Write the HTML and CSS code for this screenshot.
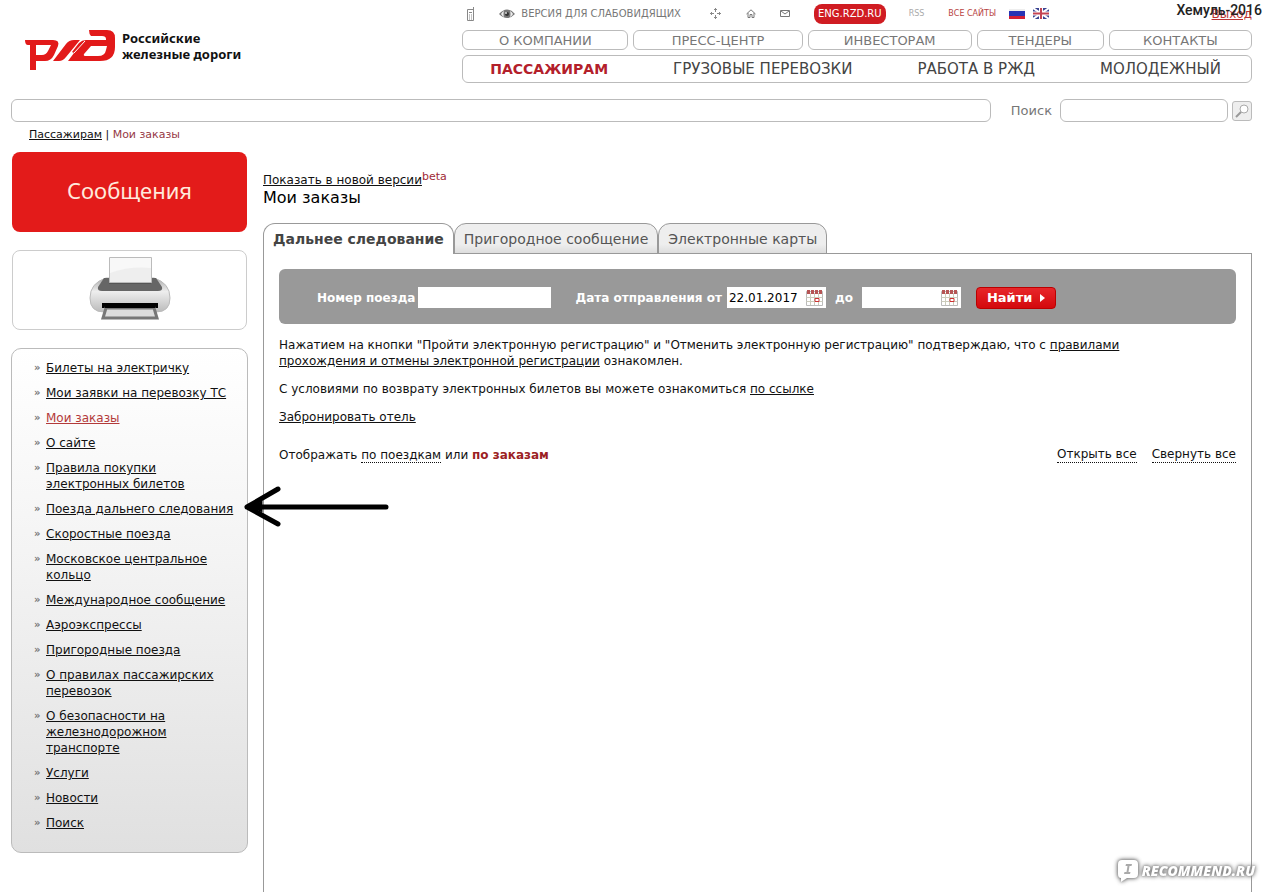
FILE: index.html
```html
<!DOCTYPE html>
<html lang="ru">
<head>
<meta charset="utf-8">
<title>Мои заказы</title>
<link rel="stylesheet" href="styles.css">
</head>
<body>
<div class="page">
  <header class="header">
    <a class="brand" href="#">
      <svg class="brand-mark" viewBox="0 0 92 42" aria-hidden="true">
        <path fill="#e21a1a" fill-rule="evenodd" d="M0 11H28Q35 11 33 17L29 26Q26 32 20 32H11V41H5V16H3Q0 16 0 11ZM11 16V26H17Q21 26 23 22L26 16Z"/>
        <path fill="#e21a1a" d="M28 32 41 15Q44 11 49 11H55L41 28Q38 32 34 32Z"/>
        <path fill="#e21a1a" fill-rule="evenodd" d="M43 32 49 24 47 23 54 14Q57 11 61 11H81V10Q81 7 77 7H66Q64 5 64 1H82Q90 1 90 9V18Q90 32 75 32ZM66 17 59 25Q58 27 61 27H73Q80 27 81 21L82 17Z"/>
        <path fill="none" stroke="#fff" d="M49 24 60 12"/>
      </svg>
      <span class="brand-name">Российские<br>железные дороги</span>
    </a>
    <div class="header-nav">
      <div class="tools">
        <a class="tool phone" href="#" aria-label="Мобильная версия"><svg width="9" height="14" viewBox="0 0 9 14" fill="none" stroke="#888"><path d="M1.500 2.500h6v11h-6zM7.500 3V0M3 5.500h3M3 8h1m1 0h1M3 10h1m1 0h1M3 12h1m1 0h1"/></svg></a>
        <a class="tool vision" href="#"><svg width="16" height="10" viewBox="0 0 16 10"><path d="M0 5Q8-4 16 5Q8 13 0 5Z" fill="#777"/><path d="M2 5Q3 3 5 2Q4 5 5 8Q3 7 2 5ZM14 5Q13 3 11 2Q12 5 11 8Q13 7 14 5Z" fill="#eee"/><circle cx="8" cy="5" r="2" fill="#333"/><circle cx="7" cy="4" r="1" fill="#ddd"/></svg>ВЕРСИЯ ДЛЯ СЛАБОВИДЯЩИХ</a>
        <a class="tool move" href="#" aria-label="Карта сайта"><svg width="11" height="11" viewBox="0 0 11 11" fill="none" stroke="#888"><path d="M5.500 0v4m0 3v4M0 5.500h4m3 0h4M4 1.500h3M4 9.500h3M1.500 4v3M9.500 4v3"/></svg></a>
        <a class="tool home" href="#" aria-label="Главная"><svg width="10" height="9" viewBox="0 0 10 9" fill="none" stroke="#777"><path d="M.5 5 5 .8 9.500 5M2 4v4.500h2v-3h2v3h2V4"/></svg></a>
        <a class="tool mail" href="#" aria-label="Почта"><svg width="10" height="7" viewBox="0 0 10 7" fill="none" stroke="#777"><path d="M.5.5h9v6h-9zM1 1l4 3 4-3"/></svg></a>
        <a class="tool english" href="#">ENG.RZD.RU</a>
        <a class="tool rss" href="#">RSS</a>
        <a class="tool sites" href="#">ВСЕ САЙТЫ</a>
        <a class="tool flag" href="#" aria-label="Русский"><svg width="16" height="10" viewBox="0 0 16 10"><path fill="#eee" d="M0 0h16v4H0z"/><path fill="#2733b4" d="M0 2h16v5H0z"/><path fill="#d22035" d="M0 7h16v3H0z"/></svg></a>
        <a class="tool flag-gb" href="#" aria-label="English"><svg width="16" height="11" viewBox="0 0 16 11"><path fill="#394391" d="M0 0h16v11H0z"/><path stroke="#fff" stroke-width="2" d="M0 0l16 11M16 0 0 11"/><path stroke="#fff" stroke-width="4" d="M8 0v11M0 5.500h16"/><path stroke="#c44453" stroke-width="2" d="M8 0v11M0 5.500h16"/></svg></a>
        <a class="tool logout" href="#">Выход</a>
      </div>
      <nav class="nav-small">
        <a href="#">О КОМПАНИИ</a><a href="#">ПРЕСС-ЦЕНТР</a><a href="#">ИНВЕСТОРАМ</a><a href="#">ТЕНДЕРЫ</a><a href="#">КОНТАКТЫ</a>
      </nav>
      <nav class="nav-main">
        <a class="active" href="#">ПАССАЖИРАМ</a><a href="#">ГРУЗОВЫЕ ПЕРЕВОЗКИ</a><a href="#">РАБОТА В РЖД</a><a href="#">МОЛОДЕЖНЫЙ</a>
      </nav>
    </div>
  </header>

  <form class="search">
    <div class="search-strip"></div>
    <label for="q">Поиск</label>
    <input id="q" type="text">
    <button type="button" aria-label="Искать"><svg width="18" height="18" viewBox="0 0 18 18" fill="none"><circle cx="11" cy="7" r="4" stroke="#aaa" fill="#fff"/><path d="m8 10-5 5" stroke="#999" stroke-width="2"/></svg></button>
  </form>

  <nav class="crumbs"><a href="#">Пассажирам</a> | <span>Мои заказы</span></nav>

  <div class="columns">
    <aside class="side">
      <a class="messages" href="#">Сообщения</a>
      <a class="print" href="#" aria-label="Печать">
        <svg width="82" height="64" viewBox="0 0 82 64">
          <defs><linearGradient id="shell" x1="0" y1="0" x2="0" y2="1"><stop offset="0" stop-color="#aaa"/><stop offset=".4" stop-color="#eee"/><stop offset="1" stop-color="#bbb"/></linearGradient></defs>
          <path d="M17 22h48q16 5 16 20 0 14-14 14H15Q1 56 1 42 1 27 17 22Z" fill="url(#shell)" stroke="#bbb"/>
          <path d="M15 22h52l6 9q1 4-4 4H13q-5 0-4-4Z" fill="#666"/>
          <path d="M20 26h42v2H20z" fill="#555"/>
          <path d="M20.500 1.500h42v25h-42z" fill="#f8f8f8" stroke="#bbb"/>
          <path d="M21 17q20-7 41-5v14H21Z" fill="#eee"/>
          <path d="M13 47h56v5H13z" fill="#000"/>
          <path d="M17 52h48l3 10H14Z" fill="#ddd" stroke="#777" stroke-width="3"/>
          <path d="M16 50h50v2H16z" fill="#000"/>
        </svg>
      </a>
      <ul class="menu">
        <li><a href="#">Билеты на электричку</a></li>
        <li><a href="#">Мои заявки на перевозку ТС</a></li>
        <li><a class="active" href="#">Мои заказы</a></li>
        <li><a href="#">О сайте</a></li>
        <li><a href="#">Правила покупки электронных билетов</a></li>
        <li><a href="#">Поезда дальнего следования</a></li>
        <li><a href="#">Скоростные поезда</a></li>
        <li><a href="#">Московское центральное кольцо</a></li>
        <li><a href="#">Международное сообщение</a></li>
        <li><a href="#">Аэроэкспрессы</a></li>
        <li><a href="#">Пригородные поезда</a></li>
        <li><a href="#">О правилах пассажирских перевозок</a></li>
        <li><a href="#">О безопасности на железнодорожном транспорте</a></li>
        <li><a href="#">Услуги</a></li>
        <li><a href="#">Новости</a></li>
        <li><a href="#">Поиск</a></li>
      </ul>
    </aside>

    <main class="main">
      <div class="version"><a href="#">Показать в новой версии</a><span class="beta">beta</span></div>
      <h1>Мои заказы</h1>
      <div class="tabs">
        <button type="button" class="tab current">Дальнее следование</button>
        <button type="button" class="tab">Пригородное сообщение</button>
        <button type="button" class="tab">Электронные карты</button>
      </div>
      <section class="panel">
        <form class="filter">
          <label for="train">Номер поезда</label>
          <input id="train" class="train" type="text">
          <label for="from" class="from-label">Дата отправления от</label>
          <span class="date"><input id="from" type="text" value="22.01.2017"><svg width="17" height="16" viewBox="0 0 17 16"><path d="M.5 1.500h16v14H.5z" fill="#fff" stroke="#bbb"/><path d="M.5 7.500h16m-16 4h16M4.500 3v12m4-12v12m4-12v12" stroke="#ccb" fill="none"/><path d="M1 0h3v4H1zm4 0h3v4H5zm4 0h3v4H9zm4 0h3v4h-3z" fill="#b65555"/><path d="M9 8.500h4v3H9z" fill="#fff" stroke="#c33"/></svg></span>
          <label for="to" class="to-label">до</label>
          <span class="date"><input id="to" type="text"><svg width="17" height="16" viewBox="0 0 17 16"><path d="M.5 1.500h16v14H.5z" fill="#fff" stroke="#bbb"/><path d="M.5 7.500h16m-16 4h16M4.500 3v12m4-12v12m4-12v12" stroke="#ccb" fill="none"/><path d="M1 0h3v4H1zm4 0h3v4H5zm4 0h3v4H9zm4 0h3v4h-3z" fill="#b65555"/><path d="M9 8.500h4v3H9z" fill="#fff" stroke="#c33"/></svg></span>
          <button type="button" class="find">Найти<svg width="5" height="8" viewBox="0 0 5 8"><path d="M0 0 5 4 0 8Z" fill="#fff"/></svg></button>
        </form>
        <p>Нажатием на кнопки "Пройти электронную регистрацию" и "Отменить электронную регистрацию" подтверждаю, что с <a href="#">правилами прохождения и отмены электронной регистрации</a> ознакомлен.</p>
        <p>С условиями по возврату электронных билетов вы можете ознакомиться <a href="#">по ссылке</a></p>
        <p><a href="#">Забронировать отель</a></p>
        <div class="view">
          <span>Отображать <a class="dotted" href="#">по поездкам</a> или <b>по заказам</b></span>
          <span class="view-all"><a class="dotted" href="#">Открыть все</a><a class="dotted" href="#">Свернуть все</a></span>
        </div>
      </section>
    </main>
  </div>

  <span class="user">Хемуль-2016</span>
  <svg class="arrow" width="146" height="42" viewBox="0 0 146 42" fill="none" stroke="#000" stroke-width="5" stroke-linecap="round" stroke-linejoin="round" aria-hidden="true"><path d="M3 22H142M34 4 3 22 34 39"/><path d="M4 22 18 16V27Z" fill="#000" stroke-width="1"/></svg>
  <div class="watermark">
    <svg width="22" height="24" viewBox="0 0 22 24"><path d="M5 1h12q4 0 4 4v10q0 4-4 4h-7l-6 4v-4Q1 19 1 15V5Q1 1 5 1Z" fill="#fff"/><path d="M9 5h6l-.5 2h-2l-1 6h2l-.5 2H7l.5-2h2l1-6h-2Z" fill="#aaa"/></svg>
    <span>RECOMMEND.RU</span>
  </div>
</div>
</body>
</html>
```
FILE: styles.css
```css
* { box-sizing: border-box; }

body {
  margin: 0;
  background: #fff;
  color: #111;
  font: 12px/16px Verdana, "DejaVu Sans", sans-serif;
}

a { color: inherit; }
input, button { font: inherit; }

.page {
  position: relative;
  display: flex;
  flex-direction: column;
  min-height: 100vh;
  padding: 0 13px 0 11px;
  overflow: hidden;
}

.header {
  display: grid;
  grid-template-columns: 4fr 7fr;
  height: 83px;
}

.brand {
  display: flex;
  align-items: flex-start;
  gap: 5px;
  padding: 29px 0 0 14px;
  text-decoration: none;
}

.brand-mark { width: 92px; height: 42px; }

.brand-name {
  padding-top: 1px;
  font: bold 13px/16px "Noto Sans", sans-serif;
}

.header-nav {
  display: flex;
  flex-direction: column;
  gap: 5px;
}

.tools {
  display: flex;
  align-items: center;
  height: 25px;
  padding: 2px 0 0 4px;
  color: #777;
  font-size: 10px;
  line-height: 12px;
}

.tool { display: flex; align-items: center; text-decoration: none; }
.vision { gap: 6px; margin-left: 24px; }
.move { margin-left: 29px; }
.home { margin-left: 25px; }
.mail { margin-left: 24px; }

.english {
  height: 20px;
  margin-left: 24px;
  padding: 0 4px;
  border-radius: 8px;
  background: #d01c22;
  color: #fff;
}

.rss { margin-left: 23px; color: #aaa; font-size: 8px; }
.sites { margin-left: 24px; color: #b84444; font-size: 8px; }
.flag { margin-left: 13px; }
.flag-gb { margin-left: 8px; }
.logout { margin-left: auto; color: #b33; font-size: 12px; text-decoration: underline; }

.nav-small {
  display: grid;
  grid-template-columns: 166fr 169fr 164fr 127fr 143fr;
  gap: 5px;
}

.nav-small a {
  height: 20px;
  border: 1px solid #bbb;
  border-radius: 6px;
  color: #777;
  font-size: 13px;
  line-height: 20px;
  text-align: center;
  text-decoration: none;
}

.nav-main {
  display: flex;
  justify-content: space-between;
  height: 28px;
  padding: 0 30px 0 27px;
  border: 1px solid #bbb;
  border-radius: 6px;
  color: #444;
  font-size: 15px;
  line-height: 27px;
}

.nav-main a { text-decoration: none; }
.nav-main .active { color: #b3202a; font-size: 14px; font-weight: bold; }

.search {
  display: flex;
  align-items: center;
  margin-top: 16px;
}

.search-strip {
  flex: 1;
  height: 23px;
  border: 1px solid #bbb;
  border-radius: 6px;
}

.search label { margin: 0 8px 0 20px; color: #777; font-size: 13px; }

.search input {
  width: 168px;
  height: 23px;
  border: 1px solid #bbb;
  border-radius: 6px;
}

.search button {
  width: 20px;
  height: 20px;
  margin-left: 4px;
  padding: 0;
  border: 1px solid #bbb;
  border-radius: 3px;
  background: #eee;
}

.search svg { display: block; }

.crumbs { padding: 5px 18px 9px; font-size: 11px; }
.crumbs span { color: #963946; }

.columns { display: flex; flex: 1; gap: 15px; }

.side {
  display: flex;
  flex: none;
  flex-direction: column;
  gap: 18px;
  width: 237px;
}

.messages, .print {
  display: flex;
  align-items: center;
  justify-content: center;
  height: 80px;
  margin: 0 1px;
  border-radius: 8px;
}

.messages {
  padding-bottom: 4px;
  background: #e31b1a;
  color: #ffe9dc;
  font: 22px/32px "Noto Sans", sans-serif;
  text-decoration: none;
}

.print { border: 1px solid #ccc; padding-bottom: 4px; }

.menu {
  display: flex;
  flex-direction: column;
  gap: 9px;
  margin: 0;
  padding: 11px 4px 21px 34px;
  border: 1px solid #bbb;
  border-radius: 10px;
  background: linear-gradient(#fff, #f4f4f4 40%, #e0e0e0);
  list-style: none;
}

.menu li { position: relative; }

.menu li::before {
  content: "»";
  position: absolute;
  left: -12px;
  color: #777;
  font-weight: bold;
  font-size: 10px;
}

.menu .active { color: #b33a3a; }

.main { display: flex; flex: 1; flex-direction: column; padding-top: 18px; }

.version { height: 20px; line-height: 20px; }
.beta { color: #a02a35; font-size: 11px; vertical-align: 4px; line-height: 10px; }

h1 { margin: 0; color: #000; font-size: 16px; font-weight: normal; line-height: 16px; }

.tabs { display: flex; margin-top: 17px; }

.tab {
  height: 31px;
  margin: 0 0 -1px;
  padding: 0 9px;
  border: 1px solid #999;
  border-radius: 12px 12px 0 0;
  background: linear-gradient(#eee, #eee 70%, #ddd);
  color: #555;
  font-size: 14px;
}

.tab.current {
  position: relative;
  border-bottom: 0;
  background: #fff;
  color: #444;
  font-weight: bold;
}

.panel {
  flex: 1;
  padding: 15px 15px 0;
  border: 1px solid #999;
  border-bottom: 0;
}

.filter {
  display: flex;
  align-items: center;
  height: 55px;
  margin-bottom: 13px;
  padding: 2px 38px 0;
  border-radius: 6px;
  background: #999;
  color: #fff;
  font-weight: bold;
}

.filter input {
  height: 21px;
  padding: 0 2px;
  border: 0;
  background: #fff;
  font-weight: normal;
}

.train { width: 133px; margin-left: 3px; }
.from-label { margin: 0 5px 0 24px; }
.to-label { margin: 0 9px; }
.date { display: flex; align-items: center; width: 99px; background: #fff; padding-right: 3px; }
.date input { flex: 1; min-width: 0; }
.date svg { flex: none; }

.find {
  display: flex;
  align-items: center;
  gap: 8px;
  height: 22px;
  margin-left: 15px;
  padding: 0 10px;
  border: 1px solid #b00;
  border-radius: 4px;
  background: linear-gradient(#e8262a, #d3090d);
  color: #fff;
  font-size: 13px;
}

.panel p { margin: 0 0 12px; }

.panel p:first-of-type { max-width: 900px; }

.view { display: flex; justify-content: space-between; margin-top: 22px; }
.view b { color: #9c1f24; }
.view-all { display: flex; gap: 15px; }
.dotted { border-bottom: 1px dotted #111; text-decoration: none; line-height: 15px; }

.user {
  position: absolute;
  top: 2px;
  right: 3px;
  color: #222;
  font: 500 14px/16px Roboto, sans-serif;
}

.arrow { position: absolute; top: 485px; left: 244px; }

.watermark {
  position: absolute;
  right: 10px;
  bottom: 9px;
  display: flex;
  align-items: center;
  gap: 3px;
  color: #fff;
  font: italic 800 14px/24px "Open Sans", sans-serif;
  filter: drop-shadow(0 0 2px #777) drop-shadow(0 0 1px #999);
}
```
